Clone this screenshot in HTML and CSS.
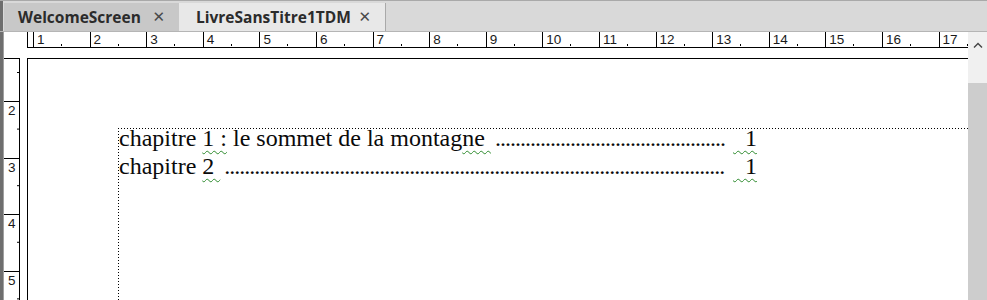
FILE: index.html
```html
<!DOCTYPE html>
<html>
<head>
<meta charset="utf-8">
<title>LivreSansTitre1TDM</title>
<link rel="stylesheet" href="styles.css">
</head>
<body>

<div class="tabbar">
  <div class="tab tab-welcome"><span>WelcomeScreen</span><span class="close">&#x2715;</span></div>
  <div class="tab tab-active"><span>LivreSansTitre1TDM</span><span class="close">&#x2715;</span></div>
</div>

<div class="workspace">
  <div class="edge"></div>

  <div class="main">
    <div class="corner"></div>
    <div class="hruler">
      <div class="cm">1</div><div class="cm">2</div><div class="cm">3</div><div class="cm">4</div>
      <div class="cm">5</div><div class="cm">6</div><div class="cm">7</div><div class="cm">8</div>
      <div class="cm">9</div><div class="cm">10</div><div class="cm">11</div><div class="cm">12</div>
      <div class="cm">13</div><div class="cm">14</div><div class="cm">15</div><div class="cm">16</div>
      <div class="cm">17</div>
    </div>

    <div class="vruler">
      <div class="vcm">2</div><div class="vcm">3</div><div class="vcm">4</div><div class="vcm">5</div>
    </div>

    <div class="page">
      <div class="frame">
        <div class="toc">
          <div class="toc-line">
            <span class="title">chapitre <span class="sq">1 :</span> le sommet de la montag<span class="sq">ne </span></span>
            <span class="leader">..............................................</span>
            <span class="num"><span class="sq">&nbsp;&nbsp;1</span></span>
          </div>
          <div class="toc-line">
            <span class="title">chapitre <span class="sq">2 </span></span>
            <span class="leader">....................................................................................................</span>
            <span class="num"><span class="sq">&nbsp;&nbsp;1</span></span>
          </div>
        </div>
      </div>
    </div>
  </div>

  <div class="scroll">
    <div class="scroll-up">
      <svg width="10" height="6" viewBox="0 0 10 6"><path d="M1 5.5 L5 1.5 L9 5.5" fill="none" stroke="#444" stroke-width="1.4"/></svg>
    </div>
    <div class="scroll-thumb"></div>
  </div>
</div>

</body>
</html>
```

FILE: styles.css
```css
html, body {
  margin: 0;
  padding: 0;
}

body {
  width: 987px;
  height: 300px;
  overflow: hidden;
  background: #fff;
  font-family: "Liberation Sans", Arial, sans-serif;
}

/* tab strip */
.tabbar {
  display: flex;
  height: 28px;
  padding-top: 2px;
  padding-left: 4px;
  background: #d9d9d9;
  border-top: 1px solid #a9a9a9;
  border-bottom: 1px solid #b5b5b5;
  box-shadow: inset 3px 0 0 #6e6e6e;
}

.tab {
  display: flex;
  align-items: center;
  justify-content: space-between;
  box-sizing: border-box;
  height: 28px;
  font-family: "Open Sans", "Noto Sans", sans-serif;
  font-weight: 700;
  font-size: 15.5px;
  color: #2b2b2b;
}

.tab-welcome {
  width: 175px;
  padding: 0 14px 0 14px;
  background: #c8c8c8;
}

.tab-active {
  width: 207px;
  padding: 0 14px 0 17px;
  background: #e8e8e8;
  border-right: 1px solid #a9a9a9;
}

.tab .close {
  font-family: "DejaVu Sans", sans-serif;
  font-weight: 700;
  font-size: 15px;
  color: #4a4a4a;
}

/* work area */
.workspace {
  display: flex;
  height: 269px;
}

.edge {
  width: 3px;
  background: #6e6e6e;
  border-right: 1px solid #a0a0a0;
}

.main {
  flex: 1;
  display: grid;
  grid-template-columns: 23px 1fr;
  grid-template-rows: 26px 1fr;
  overflow: hidden;
}

.hruler {
  display: flex;
  height: 15px;
  padding-left: 5px;
  border-left: 1px solid #000;
  border-bottom: 1px solid #000;
  overflow: hidden;
}

.cm {
  flex: none;
  box-sizing: border-box;
  width: 56.6px;
  height: 15px;
  padding-left: 3px;
  border-left: 1px solid #000;
  font-size: 13.5px;
  line-height: 16px;
  color: #1a1a1a;
  background: linear-gradient(#000, #000) no-repeat 27px 12px / 1px 2px;
}

.vruler {
  width: 15px;
  border-top: 1px solid #000;
  border-right: 1px solid #000;
  padding-top: 42px;
  background: linear-gradient(#000 1px, transparent 1px) repeat-y right 0 top 13px / 2px 56.6px;
}

.vcm {
  box-sizing: border-box;
  height: 56.6px;
  padding: 1px 0 0 4px;
  border-top: 1px solid #000;
  font-size: 13.5px;
  line-height: 16px;
  color: #1a1a1a;
}

.page {
  border-top: 1px solid #000;
  border-left: 1px solid #000;
  background: #fff;
}

.frame {
  height: 300px;
  margin: 69px 0 0 90px;
  padding: 1px 0 0 1px;
  background:
    linear-gradient(to right, #000 1px, transparent 1px) repeat-x 0 0 / 3px 1px,
    linear-gradient(#000 1px, transparent 1px) repeat-y 0 0 / 1px 3px;
}

.toc {
  margin-top: -5px;
}

.toc-line {
  display: flex;
  width: 638px;
  font-family: "Liberation Serif", "Times New Roman", serif;
  font-size: 24px;
  line-height: 28px;
  color: #0a0a0a;
  white-space: pre;
}

.title {
  flex: none;
}

.leader {
  flex: none;
  margin-left: 4px;
  letter-spacing: -1px;
}

.num {
  flex: none;
  margin-left: auto;
}

.sq {
  text-decoration: underline wavy #2e8b2e;
  text-decoration-thickness: 1px;
  text-underline-offset: 4px;
}

/* scrollbar */
.scroll {
  width: 19px;
  display: flex;
  flex-direction: column;
}

.scroll-up {
  height: 51px;
  background: #f0f0f0;
  display: flex;
  justify-content: center;
  padding-top: 10px;
  box-sizing: border-box;
}

.scroll-thumb {
  flex: 1;
  background: #cdcdcd;
}
```
